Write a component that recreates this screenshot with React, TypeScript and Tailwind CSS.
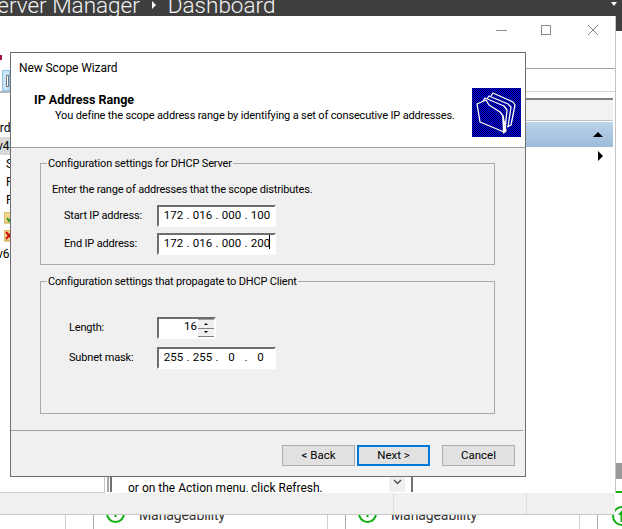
import React from 'react';

const font = "font-['Roboto',Arial,sans-serif]";
const dlgText = 'text-[11px] tracking-[-0.18px] text-black';

function Octet({ value }: { value: string }) {
  return <span className="w-[25px] text-center">{value}</span>;
}

function Dot() {
  return <span className="w-[4px] text-center">.</span>;
}

function IpField({ parts, caret = false }: { parts: string[]; caret?: boolean }) {
  return (
    <div className="relative w-[119px] h-[22px] pl-[2px] pb-[3px] bg-white border-2 border-t-[#6d6d6d] border-l-[#6d6d6d] border-r-white border-b-white flex items-center text-[11.5px] leading-[14px] text-black">
      <Octet value={parts[0]} />
      <Dot />
      <Octet value={parts[1]} />
      <Dot />
      <Octet value={parts[2]} />
      <Dot />
      <Octet value={parts[3]} />
      {caret && <span className="absolute left-[110px] top-0 w-px h-[14px] bg-black" />}
    </div>
  );
}

function FieldRow({ label, width = 'w-[93px]', children }: { label: string; width?: string; children: React.ReactNode }) {
  return (
    <div className="flex items-center">
      <span className={`${width} ${dlgText}`}>{label}</span>
      {children}
    </div>
  );
}

function GroupBox({ title, className, children }: { title: string; className: string; children?: React.ReactNode }) {
  return (
    <div className={`relative w-[455px] border border-[#a9a9a9] ${className}`}>
      <span className={`absolute left-[6px] top-[-7px] bg-[#f0f0f0] px-px leading-[14px] whitespace-nowrap ${dlgText}`}>{title}</span>
      {children}
    </div>
  );
}

function WizardIcon() {
  return (
    <svg width="49" height="49" viewBox="0 0 49 49" className="shrink-0">
      <defs>
        <pattern id="dither" width="2" height="2" patternUnits="userSpaceOnUse">
          <rect width="2" height="2" fill="#0000f4" />
          <rect width="1" height="1" fill="#000050" />
          <rect x="1" y="1" width="1" height="1" fill="#000050" />
        </pattern>
      </defs>
      <rect width="49" height="49" fill="url(#dither)" />
      <g fill="none" stroke="#fff" strokeWidth="1.3" strokeLinejoin="round">
        <path d="M19 8 L21 5 L41 14 L43 17 L39 37 L35 39" />
        <path d="M15 11 L17 8 L36 16 L39 19 L36 39" />
        <path d="M11 13 L13 10 L32 18 L35 22 L33 42" />
        <path d="M5 16 L14 12 L17 17 L28 24 L31 28 L32 44 L8 34 Z" />
        <path d="M31 28 L31.5 45 L34 43 Z" fill="#fff" />
      </g>
    </svg>
  );
}

function TreeRow({ children, selected = false }: { children: React.ReactNode; selected?: boolean }) {
  return (
    <div className={`h-[18px] flex items-center text-[12px] text-black whitespace-nowrap ${selected ? 'bg-[#d9d9d9]' : ''}`}>
      {children}
    </div>
  );
}

function GreenRing() {
  return (
    <svg width="19" height="19" viewBox="0 0 19 19" fill="none" className="shrink-0 mt-[-11px]">
      <circle cx="9.5" cy="9.5" r="8.5" stroke="#10b010" strokeWidth="2" />
      <rect x="8.5" y="8" width="2" height="5" fill="#10b010" />
    </svg>
  );
}

function TileCell() {
  return (
    <div className="w-[234px] shrink-0 border-r border-[#d0d0d0] flex items-start pl-[12px] gap-[14px]">
      <GreenRing />
      <span className="mt-[-8px] text-[14px] leading-[16px] tracking-[-0.1px] text-[#333] whitespace-nowrap">Manageability</span>
    </div>
  );
}

const btnBase = 'w-[73px] h-[21px] bg-[#e1e1e1] text-[11.5px] text-black flex items-center justify-center';

export default function App() {
  return (
    <div className={`relative w-[622px] h-[529px] overflow-hidden bg-white flex flex-col ${font}`}>
      {/* server manager title strip */}
      <div className="relative z-20 h-[16px] shrink-0 bg-[#3f3f3f] overflow-hidden flex items-start text-[22.5px] leading-[24px] font-light text-[#f4f4f4] whitespace-nowrap">
        <span className="ml-[-16px] mt-[-7px]">Server Manager</span>
        <span className="ml-[12px] mt-[1px] w-0 h-0 border-y-[4px] border-y-transparent border-l-[4px] border-l-white" />
        <span className="ml-[12px] mt-[-7px]">Dashboard</span>
        <span className="ml-auto mr-[5px] mt-[2px] w-0 h-0 border-x-[3px] border-x-transparent border-t-[4px] border-t-white" />
      </div>

      <div className="flex h-[477px] shrink-0">
        {/* dhcp window behind the wizard */}
        <div className="w-[616px] shrink-0 flex flex-col border-r border-[#c4c4c4]">
          <div className="h-[36px] shrink-0 flex justify-end pr-[12px] pt-[8px]">
            <svg width="112" height="14" viewBox="0 0 112 14" fill="none" stroke="#8a8a8a">
              <path d="M5 6.5 H16" />
              <rect x="50.5" y="1.5" width="9" height="9" />
              <path d="M97 1 L107 11 M107 1 L97 11" />
            </svg>
          </div>
          <div className="flex flex-1">
            {/* scope tree, mostly hidden by the wizard */}
            <div className="w-[10px] shrink-0 flex flex-col overflow-hidden">
              <div className="w-[2px] h-[5px] mt-[3px] bg-[#a01040]" />
              <div className="h-[21px] mt-[10px] ml-[2px] bg-[#cce4f7] border border-[#8fc3ea] flex items-center pl-[3px]">
                <div className="w-[6px] h-[12px] border border-[#777] bg-white" />
              </div>
              <div className="h-[2px] bg-[#b8b8b8]" />
              <div className="h-[26px]" />
              <TreeRow><span className="ml-[-7px]">ordo</span></TreeRow>
              <TreeRow selected><span className="ml-[-3px]">v4</span></TreeRow>
              <TreeRow><span className="ml-[6px]">S</span></TreeRow>
              <TreeRow><span className="ml-[6px]">P</span></TreeRow>
              <TreeRow><span className="ml-[6px]">P</span></TreeRow>
              <TreeRow>
                <svg width="10" height="12" viewBox="0 0 10 12" className="ml-[4px] shrink-0">
                  <rect x="0" y="0" width="10" height="11" fill="#f3d68a" stroke="#c9a24a" />
                  <path d="M3 6 L5 9 L8 5" fill="none" stroke="#3a9a2a" strokeWidth="2" />
                </svg>
              </TreeRow>
              <TreeRow>
                <svg width="10" height="12" viewBox="0 0 10 12" className="ml-[4px] shrink-0">
                  <rect x="0" y="0" width="10" height="11" fill="#f3d68a" stroke="#c9a24a" />
                  <path d="M2 2 L8 9 M8 2 L2 9" fill="none" stroke="#d01010" strokeWidth="2" />
                </svg>
              </TreeRow>
              <TreeRow><span className="ml-[-3px]">v6</span></TreeRow>
            </div>

            <div className="w-[516px] shrink-0" />

            {/* action pane to the right of the wizard */}
            <div className="flex-1 flex flex-col">
              <div className="h-[17px] border-b border-[#a0a0a0]" />
              <div className="h-[23px] border-b border-[#d4d4d4]" />
              <div className="h-[6px]" />
              <div className="h-[2px] mr-[2px] bg-[#808080]" />
              <div className="h-[21px] mr-[2px] bg-[#f2f2f2] border-b border-[#c0c0c0]" />
              <div className="h-[25px] mr-[2px] mt-px bg-gradient-to-b from-[#bcd3e9] to-[#9dbbdb] flex items-center justify-end pr-[10px]">
                <span className="w-0 h-0 border-x-[5px] border-x-transparent border-b-[5px] border-b-black" />
              </div>
              <div className="h-[17px] mr-[2px] flex items-center justify-end pr-[10px]">
                <span className="w-0 h-0 border-y-[5px] border-y-transparent border-l-[5px] border-l-black" />
              </div>
            </div>
          </div>
          {/* bottom of the console */}
          <div className="h-[16px] shrink-0 flex">
            <div className="w-[105px] border-r border-b border-[#c8c8c8]" />
            <div className="w-[2px]" />
            <div className="w-[3px] h-[15px] border-l-2 border-[#a8a8a8]" />
            <div className="w-[303px] h-[15px] border-x-2 border-[#707070] flex overflow-hidden">
              <span className="pl-[16px] pt-[4px] flex-1 text-[12px] leading-[14px] text-black whitespace-nowrap overflow-hidden">or on the Action menu, click Refresh.</span>
              <span className="w-[16px] bg-[#f0f0f0] flex justify-center pt-[2px]">
                <svg width="9" height="6" viewBox="0 0 9 6" fill="none" stroke="#505050" strokeWidth="1.5">
                  <path d="M1 1 L4.5 4.5 L8 1" />
                </svg>
              </span>
              <span className="w-[6px]" />
            </div>
          </div>
        </div>

        {/* next server manager tile, cut by the window edge */}
        <div className="flex-1 flex flex-col">
          <div className="h-[17px] bg-[#3f3f3f]" />
          <div className="h-[432px] shrink-0" />
          <div className="h-[18px] bg-[#9a9a9a]" />
          <div className="h-[14px]" />
          <div className="h-[2px] bg-[#10b010]" />
        </div>
      </div>

      {/* status band */}
      <div className="relative z-10 h-[22px] w-[615px] shrink-0 bg-[#f0f0f0] border-b border-[#c8c8c8] flex">
        <div className="w-[394px] border-r border-[#dcdcdc]" />
        <div className="w-[133px] border-r border-[#dcdcdc]" />
      </div>

      {/* tile row below the band */}
      <div className="flex-1 flex">
        <div className="w-[66px] shrink-0 border-r border-[#d0d0d0]" />
        <div className="w-[28px] shrink-0 border-r border-[#a8a8a8]" />
        <TileCell />
        <div className="w-[18px] shrink-0 border-r border-[#a8a8a8]" />
        <TileCell />
        <div className="w-[18px] shrink-0 border-r border-[#a8a8a8]" />
        <div className="pl-[14px] mt-[-12px]">
          <svg width="20" height="26" viewBox="0 0 20 26" fill="none" className="shrink-0">
            <circle cx="10" cy="13" r="9" stroke="#10b010" strokeWidth="2" />
            <path d="M10 7 L6 12 H8.5 V19 H11.5 V12 H14 Z" fill="#10b010" />
          </svg>
        </div>
      </div>

      {/* wizard dialog */}
      <div className="absolute z-30 left-[10px] top-[52px] w-[516px] h-[425px] border border-[#6e6e6e] bg-[#f0f0f0] flex flex-col">
        <div className="relative h-[95px] bg-white border-b border-[#a0a0a0] shrink-0">
          <div className="pl-[8px] pt-[8px] text-[12px] leading-[15px] tracking-[-0.1px] text-black">New Scope Wizard</div>
          <div className="pl-[23px] pt-[16px] text-[12.5px] leading-[15px] font-bold text-black">IP Address Range</div>
          <div className="pl-[44px] pt-px text-[11px] tracking-[-0.15px] leading-[15px] text-black">
            You define the scope address range by identifying a set of consecutive IP addresses.
          </div>
          <div className="absolute left-[461px] top-[35px]">
            <WizardIcon />
          </div>
        </div>

        <div className="flex-1 flex flex-col pt-[15px]">
          <div className="flex flex-col gap-[16px] pl-[29px]">
            <GroupBox title="Configuration settings for DHCP Server" className="h-[102px] pl-[11px] pt-[18px]">
              <div className={`leading-[15px] ${dlgText}`}>Enter the range of addresses that the scope distributes.</div>
              <div className="pl-[12px] pt-[8px] flex flex-col gap-[6px]">
                <FieldRow label="Start IP address:">
                  <IpField parts={['172', '016', '000', '100']} />
                </FieldRow>
                <FieldRow label="End IP address:">
                  <IpField parts={['172', '016', '000', '200']} caret />
                </FieldRow>
              </div>
            </GroupBox>
            <GroupBox title="Configuration settings that propagate to DHCP Client" className="h-[133px] pl-[28px] pt-[35px]">
              <div className="flex flex-col gap-[8px]">
                <FieldRow label="Length:" width="w-[88px]">
                  <div className="w-[59px] h-[22px] bg-white border-2 border-t-[#6d6d6d] border-l-[#6d6d6d] border-r-white border-b-white flex text-[11.5px] text-black">
                    <span className="flex-1 text-right leading-[15px] pr-px">16</span>
                    <div className="w-[16px] flex flex-col bg-[#f0f0f0]">
                      <span className="h-[9px] border-t border-[#a0a0a0] flex items-center justify-center">
                        <span className="w-0 h-0 border-x-[2px] border-x-transparent border-b-[2px] border-b-black" />
                      </span>
                      <span className="h-[10px] border-y border-[#808080] flex items-center justify-center">
                        <span className="w-0 h-0 border-x-[2px] border-x-transparent border-t-[2px] border-t-black" />
                      </span>
                    </div>
                  </div>
                </FieldRow>
                <FieldRow label="Subnet mask:" width="w-[88px]">
                  <IpField parts={['255', '255', '0', '0']} />
                </FieldRow>
              </div>
            </GroupBox>
          </div>
          <div className="mt-[16px] mr-[2px] h-px bg-[#a0a0a0]" />
          <div className="mt-[14px] pl-[271px] flex">
            <button type="button" className={`${btnBase} border border-[#adadad]`}>&lt; Back</button>
            <button type="button" className={`${btnBase} ml-[2px] border-2 border-[#0078d7]`}>Next &gt;</button>
            <button type="button" className={`${btnBase} ml-[12px] border border-[#adadad]`}>Cancel</button>
          </div>
        </div>
      </div>
    </div>
  );
}
